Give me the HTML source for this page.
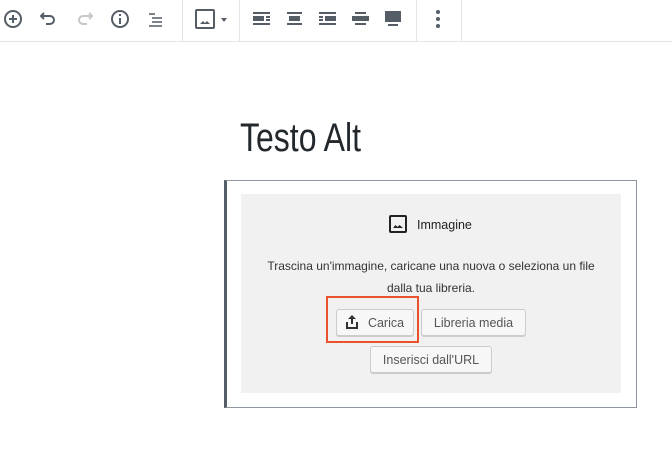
<!DOCTYPE html>
<html><head><style>
body{margin:0;width:672px;height:468px;background:#fff;font-family:"Liberation Sans",sans-serif;position:relative;overflow:hidden}
.tb{position:absolute;left:0;top:0;width:672px;height:41px;border-bottom:1px solid #e2e4e7}
.sep{position:absolute;top:0;width:1px;height:41px;background:#e2e4e7}
.ic{position:absolute;top:7px}
.title{position:absolute;left:240px;top:116px;font-size:40px;color:#23282d;transform:scaleX(.8);transform-origin:left top}
.outer{position:absolute;left:224px;top:180px;width:409px;height:226px;border:1px solid #8f98a1;border-left:3px solid #555d66}
.inner{position:absolute;left:241px;top:194px;width:380px;height:199px;background:#f1f1f1}
.t{position:absolute;font-size:12px;color:#333;text-align:center}
.btn{position:absolute;height:27px;border:1px solid #ccc;border-radius:3px;background:#f7f7f7;box-shadow:0 1px 0 #ccc;font-size:12.5px;color:#555;line-height:27px;text-align:center;box-sizing:border-box}
</style></head><body>
<div class="tb">
<svg class="ic" style="left:1px" width="24" height="24" viewBox="0 0 24 24"><circle cx="12" cy="12" r="8" fill="none" stroke="#555d66" stroke-width="2"/><path d="M12 8v8M8 12h8" stroke="#555d66" stroke-width="2"/></svg>
<svg class="ic" style="left:36px" width="24" height="24" viewBox="0 0 24 24"><path d="M8 6L5 9l3 3M5 9h9a4 4 0 010 8h-4" fill="none" stroke="#555d66" stroke-width="2"/></svg>
<svg class="ic" style="left:73px" width="24" height="24" viewBox="0 0 24 24"><path d="M16 6l3 3-3 3M19 9h-9a4 4 0 000 8h4" fill="none" stroke="#c5c8cb" stroke-width="2"/></svg>
<svg class="ic" style="left:108px" width="24" height="24" viewBox="0 0 24 24"><circle cx="12" cy="12" r="8" fill="none" stroke="#555d66" stroke-width="2"/><path d="M12 11v6M12 7v2" stroke="#555d66" stroke-width="2"/></svg>
<svg class="ic" style="left:145px" width="24" height="24" viewBox="0 0 24 24"><path d="M4 7h6M7 11h10M7 15h10M4 19h13" stroke="#555d66" stroke-width="1.5"/></svg>
<div class="sep" style="left:182px"></div>
<svg class="ic" style="left:193px" width="24" height="24" viewBox="0 0 24 24"><rect x="3" y="3" width="18" height="18" rx="1" fill="none" stroke="#555d66" stroke-width="2"/><path d="M7 17l3-3 2 2 2-2 3 3z" fill="#555d66"/></svg>
<svg class="ic" style="left:219px" width="10" height="24" viewBox="0 0 10 24"><path d="M2 11h6l-3 4z" fill="#555d66"/></svg>
<div class="sep" style="left:239px"></div>
<svg class="ic" style="left:250px" width="24" height="24" viewBox="0 0 24 24"><path d="M3 5h17v2H3zM3 9h11v5H3zM16 9h4v2h-4zM16 12h4v2h-4zM3 16h17v2H3z" fill="#555d66"/></svg>
<svg class="ic" style="left:283px" width="24" height="24" viewBox="0 0 24 24"><path d="M4 5h15v2H4zM6 9h11v5H6zM4 16h15v2H4z" fill="#555d66"/></svg>
<svg class="ic" style="left:316px" width="24" height="24" viewBox="0 0 24 24"><path d="M3 5h17v2H3zM3 9h4v2H3zM3 12h4v2H3zM9 9h11v5H9zM3 16h17v2H3z" fill="#555d66"/></svg>
<svg class="ic" style="left:349px" width="24" height="24" viewBox="0 0 24 24"><path d="M6 5h11v2H6zM3 9h17v5H3zM6 16h11v2H6z" fill="#555d66"/></svg>
<svg class="ic" style="left:382px" width="24" height="24" viewBox="0 0 24 24"><path d="M3 4h16v11H3zM6 17h10v2H6z" fill="#555d66"/></svg>
<div class="sep" style="left:416px"></div>
<svg class="ic" style="left:427px" width="24" height="24" viewBox="0 0 24 24"><circle cx="11" cy="5" r="2" fill="#555d66"/><circle cx="11" cy="12" r="2" fill="#555d66"/><circle cx="11" cy="19" r="2" fill="#555d66"/></svg>
<div class="sep" style="left:461px"></div>
</div>
<div class="title">Testo Alt</div>
<div class="outer"></div>
<div class="inner"></div>
<svg style="position:absolute;left:389px;top:215px" width="18" height="18" viewBox="0 0 18 18"><rect x="1" y="1" width="16" height="16" rx="1" fill="none" stroke="#222" stroke-width="2"/><path d="M4 13l2.5-3 2 2 2-2 3.5 3z" fill="#222"/></svg>
<div class="t" style="left:417px;top:218px;color:#222;font-size:12.5px;text-align:left">Immagine</div>
<div class="t" style="left:241px;top:255px;width:380px;line-height:22px">Trascina un'immagine, caricane una nuova o seleziona un file<br>dalla tua libreria.</div>
<div class="btn" style="left:336px;top:309px;width:78px;padding-left:22px">Carica</div>
<svg style="position:absolute;left:345px;top:314px" width="14" height="16" viewBox="0 0 14 16"><path d="M7 1l-4 4h3v5h2V5h3z" fill="#333"/><path d="M1 8v7h12V8h-2v5H3V8z" fill="#333"/></svg>
<div class="btn" style="left:421px;top:309px;width:105px">Libreria media</div>
<div class="btn" style="left:370px;top:346px;width:122px">Inserisci dall'URL</div>
<div style="position:absolute;left:326px;top:296px;width:89px;height:43px;border:2px solid #e8522f"></div>
</body></html>
